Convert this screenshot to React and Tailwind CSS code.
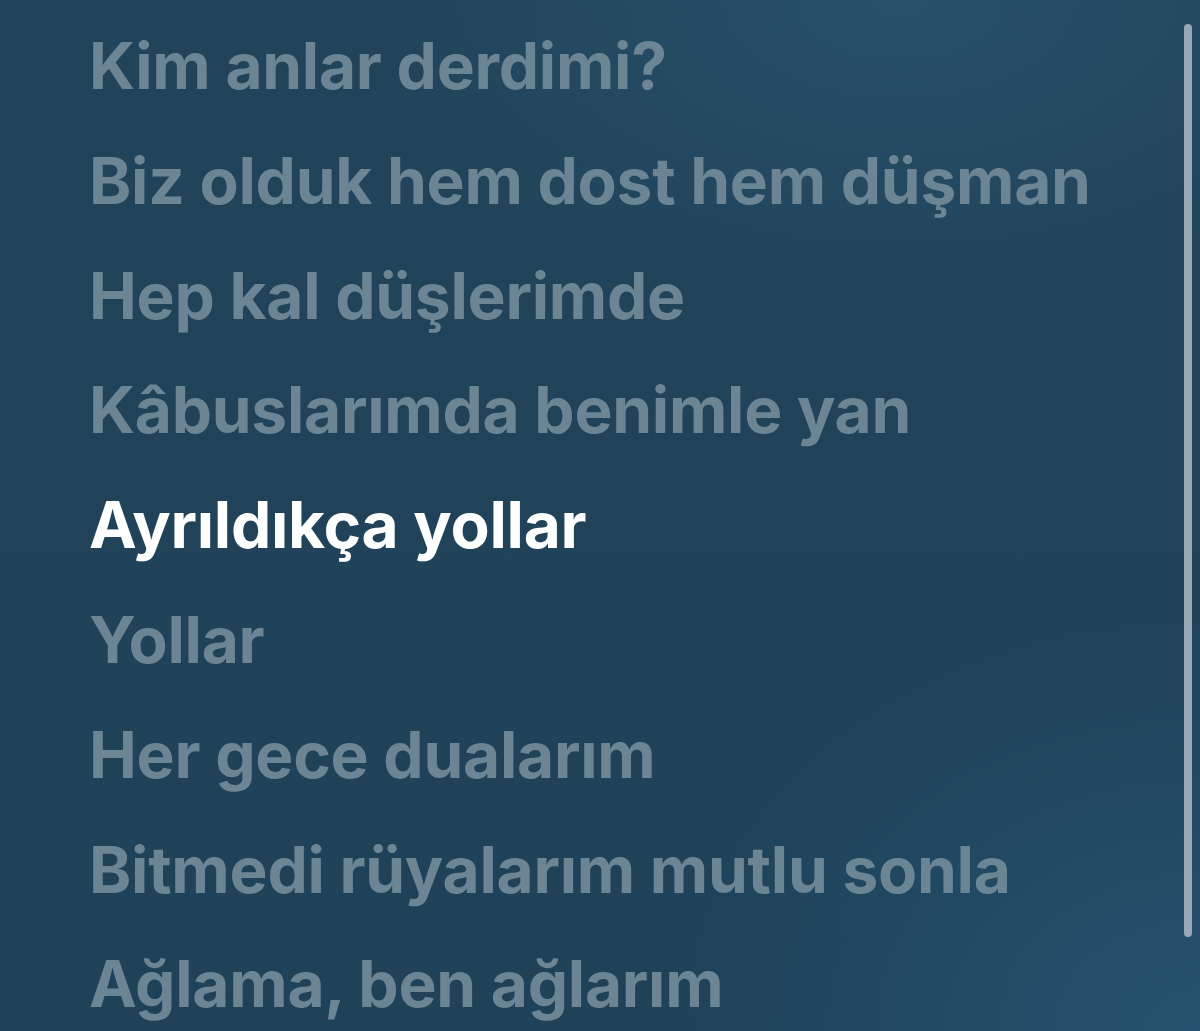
const lines = [
  "Kim anlar derdimi?",
  "Biz olduk hem dost hem düşman",
  "Hep kal düşlerimde",
  "Kâbuslarımda benimle yan",
  "Ayrıldıkça yollar",
  "Yollar",
  "Her gece dualarım",
  "Bitmedi rüyalarım mutlu sonla",
  "Ağlama, ben ağlarım",
];

const ACTIVE = 4;

export default function App() {
  return (
    <div className="relative h-[1031px] w-[1200px] overflow-hidden bg-[#21435a] bg-[radial-gradient(ellipse_45%_30%_at_75%_0%,#28506a_0%,transparent_100%),radial-gradient(ellipse_45%_40%_at_100%_100%,#26526f_0%,transparent_100%),linear-gradient(180deg,#21445a,#1f4259)] font-['Inter',sans-serif]">
      <div className="flex flex-col pl-[89px] pt-[9px]">
        {lines.map((line, i) => (
          <p
            key={i}
            className={
              i === ACTIVE
                ? "whitespace-nowrap text-[64px] leading-[114.8px] font-bold tracking-[-0.004em] text-white"
                : "whitespace-nowrap text-[64px] leading-[114.8px] font-bold tracking-[-0.004em] text-[#6b8595]"
            }
          >
            {line}
          </p>
        ))}
      </div>
      <div className="absolute right-[8px] top-[24px] h-[913px] w-[8px] rounded-full bg-[#98a9b5]" />
    </div>
  );
}
